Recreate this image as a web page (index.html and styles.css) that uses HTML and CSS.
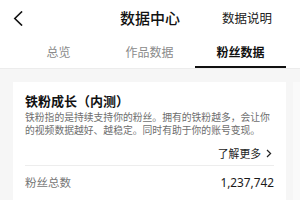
FILE: index.html
```html
<!DOCTYPE html>
<html lang="zh-CN">
<head>
<meta charset="utf-8">
<link rel="stylesheet" href="styles.css">
</head>
<body>
<div class="page">
  <header class="navbar">
    <div class="nav-left">
      <svg class="back" width="10" height="15" viewBox="0 0 10 15"><polyline points="8.5,1 1.8,7.5 8.5,14" fill="none" stroke="#111" stroke-width="1.6" stroke-linecap="square"/></svg>
    </div>
    <div class="nav-title">数据中心</div>
    <div class="nav-right">数据说明</div>
  </header>
  <nav class="tabs">
    <div class="tab">总览</div>
    <div class="tab">作品数据</div>
    <div class="tab active">粉丝数据</div>
  </nav>
  <main class="content">
    <section class="card">
      <h2 class="card-title">铁粉成长（内测）</h2>
      <p class="card-desc">铁粉指的是持续支持你的粉丝。拥有的铁粉越多，会让你的视频数据越好、越稳定。同时有助于你的账号变现。</p>
      <div class="more-row">
        <span class="more">了解更多</span>
        <svg class="chev" width="6" height="9" viewBox="0 0 6 9"><polyline points="1,1 4.6,4.5 1,8" fill="none" stroke="#222" stroke-width="1.2"/></svg>
      </div>
      <div class="stat-row">
        <span class="stat-label">粉丝总数</span>
        <span class="stat-value">1,237,742</span>
      </div>
    </section>
    <section class="card card-next"></section>
  </main>
</div>
</body>
</html>
```
FILE: styles.css
```css
* { box-sizing: border-box; margin: 0; padding: 0; }
html, body { width: 300px; height: 200px; overflow: hidden; }
body {
  background: #f6f6f6;
  font-family: "Noto Sans CJK SC", "Noto Sans", sans-serif;
  color: #161616;
}
.page { width: 300px; height: 200px; overflow: hidden; }
.navbar {
  height: 36px;
  background: #fff;
  display: grid;
  grid-template-columns: 1fr auto 1fr;
  align-items: center;
}
.nav-left { padding-left: 13px; display: flex; align-items: center; padding-top: 1px; }
.nav-title { font-size: 15px; line-height: 20px; font-weight: 500; color: #111; }
.nav-right { text-align: right; padding-right: 28px; font-size: 12.5px; line-height: 18px; color: #222; }
.tabs {
  background: #fff;
  display: flex;
  padding: 0 14px 0 13px;
  border-bottom: 1px solid #ececec;
}
.tab {
  flex: 1;
  height: 32px;
  display: flex;
  align-items: center;
  justify-content: center;
  font-size: 12px;
  line-height: 16px;
  color: #8a8a8a;
  border-bottom: 2px solid transparent;
  padding-top: 1px;
}
.tab.active { color: #111; font-weight: 700; border-bottom-color: #111; }
.content {
  display: flex;
  gap: 7px;
  padding: 13px 0 0 13px;
}
.card {
  flex: 0 0 273px;
  background: #fff;
  padding: 10px 12px 0;
  height: 140px;
}
.card-next { flex: 0 0 273px; background: #fafafa; }
.card-title { font-size: 13px; line-height: 18px; font-weight: 700; color: #111; }
.card-desc {
  margin-top: 1px;
  font-size: 9.8px;
  line-height: 13px;
  color: #6e6e6e;
}
.more-row {
  display: flex;
  justify-content: flex-end;
  align-items: center;
  gap: 5px;
  padding: 9px 2px 5px 0;
  border-bottom: 1px solid #ededed;
}
.more { font-size: 10.8px; line-height: 14px; color: #1c1c1c; }
.chev { display: block; }
.stat-row {
  display: flex;
  justify-content: space-between;
  align-items: center;
  padding-top: 8px;
}
.stat-label { font-size: 11.5px; line-height: 16px; color: #777; }
.stat-value { font-size: 11.8px; line-height: 16px; color: #1a1a1a; font-family: "Noto Sans", sans-serif; }
```
